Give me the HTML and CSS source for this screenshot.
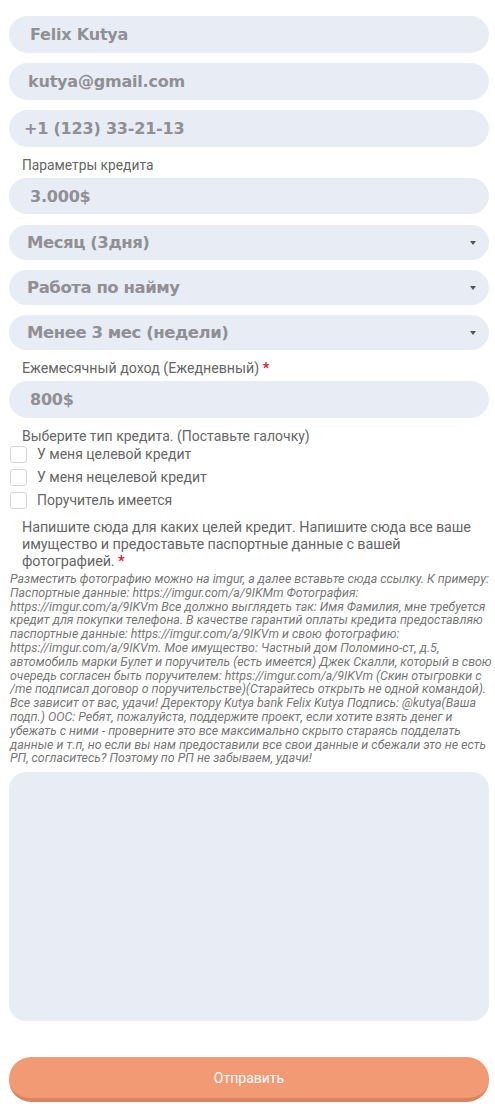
FILE: index.html
```html
<!DOCTYPE html>
<html lang="ru">
<head>
<meta charset="utf-8">
<link rel="stylesheet" href="styles.css">
</head>
<body>
<form class="form">
  <div class="field input-pill"><span class="val v1">Felix Kutya</span></div>
  <div class="field input-pill"><span class="val v2">kutya@gmail.com</span></div>
  <div class="field input-pill"><span class="val v3">+1 (123) 33-21-13</span></div>

  <div class="label lbl-params">Параметры кредита</div>
  <div class="input-pill amount"><span class="val v1">3.000$</span></div>

  <div class="select-pill sel1"><span class="val sval">Месяц (3дня)</span><span class="arrow"></span></div>
  <div class="select-pill"><span class="val sval">Работа по найму</span><span class="arrow"></span></div>
  <div class="select-pill"><span class="val sval">Менее 3 мес (недели)</span><span class="arrow"></span></div>

  <div class="label lbl-income">Ежемесячный доход (Ежедневный) <span class="req">*</span></div>
  <div class="input-pill income"><span class="val v1">800$</span></div>

  <div class="label lbl-type">Выберите тип кредита. (Поставьте галочку)</div>
  <div class="checks">
    <label class="check"><span class="box"></span><span>У меня целевой кредит</span></label>
    <label class="check"><span class="box"></span><span>У меня нецелевой кредит</span></label>
    <label class="check"><span class="box"></span><span>Поручитель имеется</span></label>
  </div>

  <div class="label lbl-purpose">Напишите сюда для каких целей кредит. Напишите сюда все ваше имущество и предоставьте паспортные данные с вашей фотографией. <span class="req">*</span></div>
  <p class="hint">Разместить фотографию можно на imgur, а далее вставьте сюда ссылку. К примеру:<br>Паспортные данные: https://imgur.com/a/9IKMm Фотография:<br>https://imgur.com/a/9IKVm Все должно выглядеть так: Имя Фамилия, мне требуется<br>кредит для покупки телефона. В качестве гарантий оплаты кредита предоставляю<br>паспортные данные: https://imgur.com/a/9IKVm и свою фотографию:<br>https://imgur.com/a/9IKVm. Мое имущество: Частный дом Поломино-ст, д.5,<br>автомобиль марки Булет и поручитель (есть имеется) Джек Скалли, который в свою<br>очередь согласен быть поручителем: https://imgur.com/a/9IKVm (Скин отыгровки с<br>/me подписал договор о поручительстве)(Старайтесь открыть не одной командой).<br>Все зависит от вас, удачи! Деректору Kutya bank Felix Kutya Подпись: @kutya(Ваша<br>подп.) OOC: Ребят, пожалуйста, поддержите проект, если хотите взять денег и<br>убежать с ними - проверните это все максимально скрыто стараясь подделать<br>данные и т.п, но если вы нам предоставили все свои данные и сбежали это не есть<br>РП, согласитесь? Поэтому по РП не забываем, удачи!</p>

  <div class="textarea"></div>

  <button type="button" class="submit">Отправить</button>
</form>
</body>
</html>
```
FILE: styles.css
```css
* { box-sizing: border-box; }
html, body { margin: 0; padding: 0; background: #fff; }
body { width: 495px; height: 1112px; overflow: hidden; }

.form {
  padding: 16px 6px 0 9px;
  display: flex;
  flex-direction: column;
  font-family: Roboto, "Liberation Sans", sans-serif;
}

.input-pill, .select-pill {
  width: 480px;
  height: 37px;
  background: #e8ecf5;
  border-radius: 19px;
  display: flex;
  align-items: center;
}
.field { margin-bottom: 10px; }
.field:nth-of-type(3) { margin-bottom: 0; }

.val {
  font-family: "DejaVu Sans", Verdana, sans-serif;
  font-weight: bold;
  color: #8f8f94;
  font-size: 16px;
  letter-spacing: -0.2px;
}
.v1 { padding-left: 21px; }
.v2 { padding-left: 19px; }
.v3 { padding-left: 15px; }

.label {
  color: #666;
  font-size: 13.8px;
  padding-left: 13px;
  line-height: 17px;
}
.lbl-params { margin-top: 10px; margin-bottom: 4px; }
.amount { height: 36px; margin-bottom: 11px; }

.select-pill {
  height: 35px;
  justify-content: space-between;
  padding: 0 13px 0 18px;
  margin-bottom: 10px;
}
.sval { font-size: 16.5px; letter-spacing: -0.45px; }
.arrow {
  width: 0; height: 0;
  border-left: 3.5px solid transparent;
  border-right: 3.5px solid transparent;
  border-top: 4.5px solid #555;
}

.req { color: #e0202a; font-weight: bold; }
.lbl-income { margin-top: 0; margin-bottom: 4px; font-size: 14.2px; }
.income { margin-bottom: 10px; }

.lbl-type { font-size: 14px; margin-bottom: 1px; }
.checks { display: flex; flex-direction: column; gap: 6px; margin-bottom: 10px; }
.check {
  display: flex;
  align-items: center;
  gap: 10px;
  color: #666;
  font-size: 14px;
  line-height: 17px;
  padding-left: 1px;
}
.box {
  width: 17px; height: 17px;
  border: 1px solid #d6d6d6;
  border-radius: 3px;
  background: #fff;
}

.lbl-purpose { font-size: 14.4px; line-height: 17px; padding-right: 0; letter-spacing: -0.1px; }

.hint {
  margin: 2px 0 0 0;
  font-style: italic;
  font-size: 12.4px;
  line-height: 13.8px;
  color: #777;
  white-space: nowrap;
  padding-left: 1px;
}

.textarea {
  margin-top: 7px;
  width: 480px;
  height: 249px;
  background: #e8ecf5;
  border-radius: 17px;
}

.submit {
  margin-top: 36px;
  width: 480px;
  height: 45px;
  border: 0;
  border-bottom: 4px solid #dc8462;
  border-radius: 22px;
  background: #f29a74;
  color: #fff;
  font-family: Roboto, "Liberation Sans", sans-serif;
  font-size: 14px;
  padding: 0;
}
```
